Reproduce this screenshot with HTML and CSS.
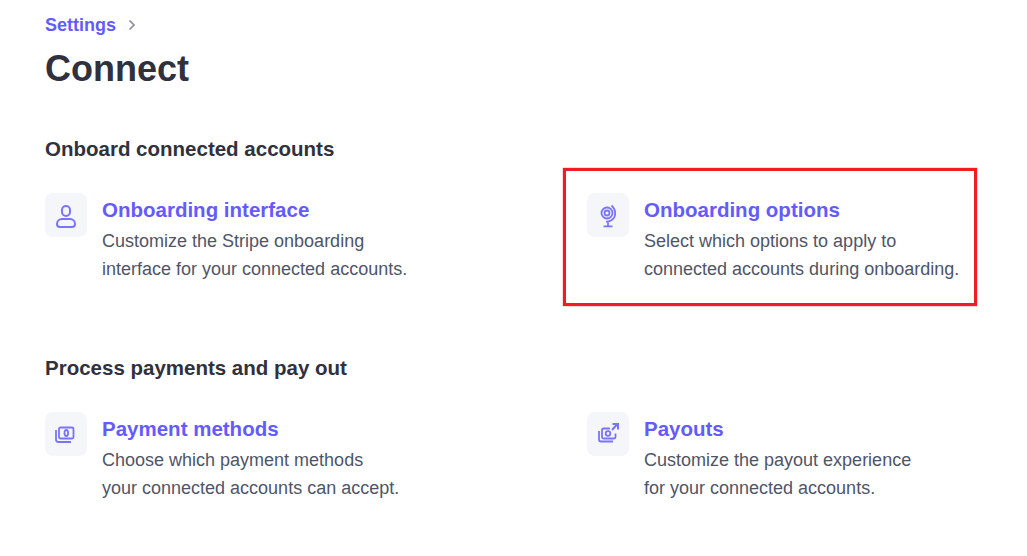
FILE: index.html
```html
<!DOCTYPE html>
<html lang="en">
<head>
<meta charset="utf-8">
<title>Connect</title>
<link rel="stylesheet" href="styles.css">
</head>
<body>
<main class="page">
  <nav class="crumbs"><a class="crumb-link">Settings</a>
    <svg class="chev" viewBox="0 0 8 12" width="8" height="12"><path d="M1.5 1.500 6 6l-4.500 4.500" fill="none" stroke="#8a8f9c" stroke-width="1.700"/></svg>
  </nav>
  <h1 class="title">Connect</h1>

  <h2 class="section-head">Onboard connected accounts</h2>
  <section class="cards">
    <article class="card">
      <div class="tile"><svg viewBox="0 0 28 28" width="28" height="28" fill="none" stroke="#7a73ff" stroke-width="2"><rect x="10" y="5" width="8" height="10" rx="4"/><path d="M10 18h8a5 5 0 0 1 5 5v0a3 3 0 0 1-3 3H8a3 3 0 0 1-3-3v0a5 5 0 0 1 5-5z"/></svg></div>
      <div class="body"><h3 class="card-title">Onboarding interface</h3><p class="card-text">Customize the Stripe onboarding<br>interface for your connected accounts.</p></div>
    </article>
    <article class="card">
      <div class="tile"><svg viewBox="0 0 28 28" width="28" height="28" fill="none" stroke="#7a73ff" stroke-width="1.800"><circle cx="13" cy="12" r="5.500"/><circle cx="13" cy="12" r="2.500"/><path d="M17.500 4.500c5 4.500 5 12-.500 15-1.500.800-3 1.200-5 1.100M14 20.500v4.500M9.500 25.300h9"/></svg></div>
      <div class="body"><h3 class="card-title">Onboarding options</h3><p class="card-text">Select which options to apply to<br>connected accounts during onboarding.</p></div>
    </article>
  </section>

  <h2 class="section-head section-second">Process payments and pay out</h2>
  <section class="cards">
    <article class="card">
      <div class="tile"><svg viewBox="0 0 28 28" width="28" height="28" fill="none" stroke="#7a73ff" stroke-width="1.800"><rect x="7" y="7.500" width="14.500" height="11" rx="1.500"/><ellipse cx="14.300" cy="13" rx="1.800" ry="3"/><path d="M4 10v9.500A2.500 2.500 0 0 0 6.500 22H19"/></svg></div>
      <div class="body"><h3 class="card-title">Payment methods</h3><p class="card-text">Choose which payment methods<br>your connected accounts can accept.</p></div>
    </article>
    <article class="card">
      <div class="tile"><svg viewBox="0 0 28 28" width="28" height="28" fill="none" stroke="#7a73ff" stroke-width="1.800"><path d="M16 8.500H9.500A1.500 1.500 0 0 0 8 10v7a1.500 1.500 0 0 0 1.500 1.500H20a1.500 1.500 0 0 0 1.500-1.500v-3.500"/><circle cx="14" cy="13.500" r="2.300"/><path d="M5 11v8.500A2 2 0 0 0 7 21.500h12"/><path d="M18 10l5-5.500M18.500 4H24v5.500" stroke-width="2"/></svg></div>
      <div class="body"><h3 class="card-title">Payouts</h3><p class="card-text">Customize the payout experience<br>for your connected accounts.</p></div>
    </article>
  </section>

  <div class="highlight"></div>
</main>
</body>
</html>
```
FILE: styles.css
```css
html, body { margin: 0; padding: 0; background: #fff; }
body { font-family: "Liberation Sans", Arial, sans-serif; width: 1027px; height: 556px; overflow: hidden; }
.page { position: relative; padding: 13px 0 0 45px; height: 543px; }
.crumbs { display: flex; align-items: center; gap: 12px; height: 24px; }
.crumb-link { color: #635bff; font-size: 18px; font-weight: 700; }
.chev { display: block; }
.title { margin: 11px 0 0; font-size: 36px; line-height: 42px; font-weight: 700; color: #30313d; }
.section-head { margin: 47px 0 0; font-size: 20.500px; line-height: 24px; font-weight: 700; color: #30313d; }
.section-second { margin-top: 73px; }
.cards { display: grid; grid-template-columns: 542px 1fr; margin-top: 32px; }
.card { display: flex; gap: 15px; }
.tile { width: 42px; height: 44px; border-radius: 8px; background: #f5f6fa; display: flex; align-items: center; justify-content: center; flex: none; }
.body { margin-top: 4px; }
.card-title { margin: 0; font-size: 20.500px; line-height: 26px; font-weight: 700; color: #635bff; }
.card-text { margin: 4px 0 0; font-size: 18px; line-height: 28px; color: #4f5566; }
.highlight { position: absolute; left: 563px; top: 168px; width: 408px; height: 132px; border: 3px solid #f01c24; box-shadow: 0 0 1px #f01c24; }
```
